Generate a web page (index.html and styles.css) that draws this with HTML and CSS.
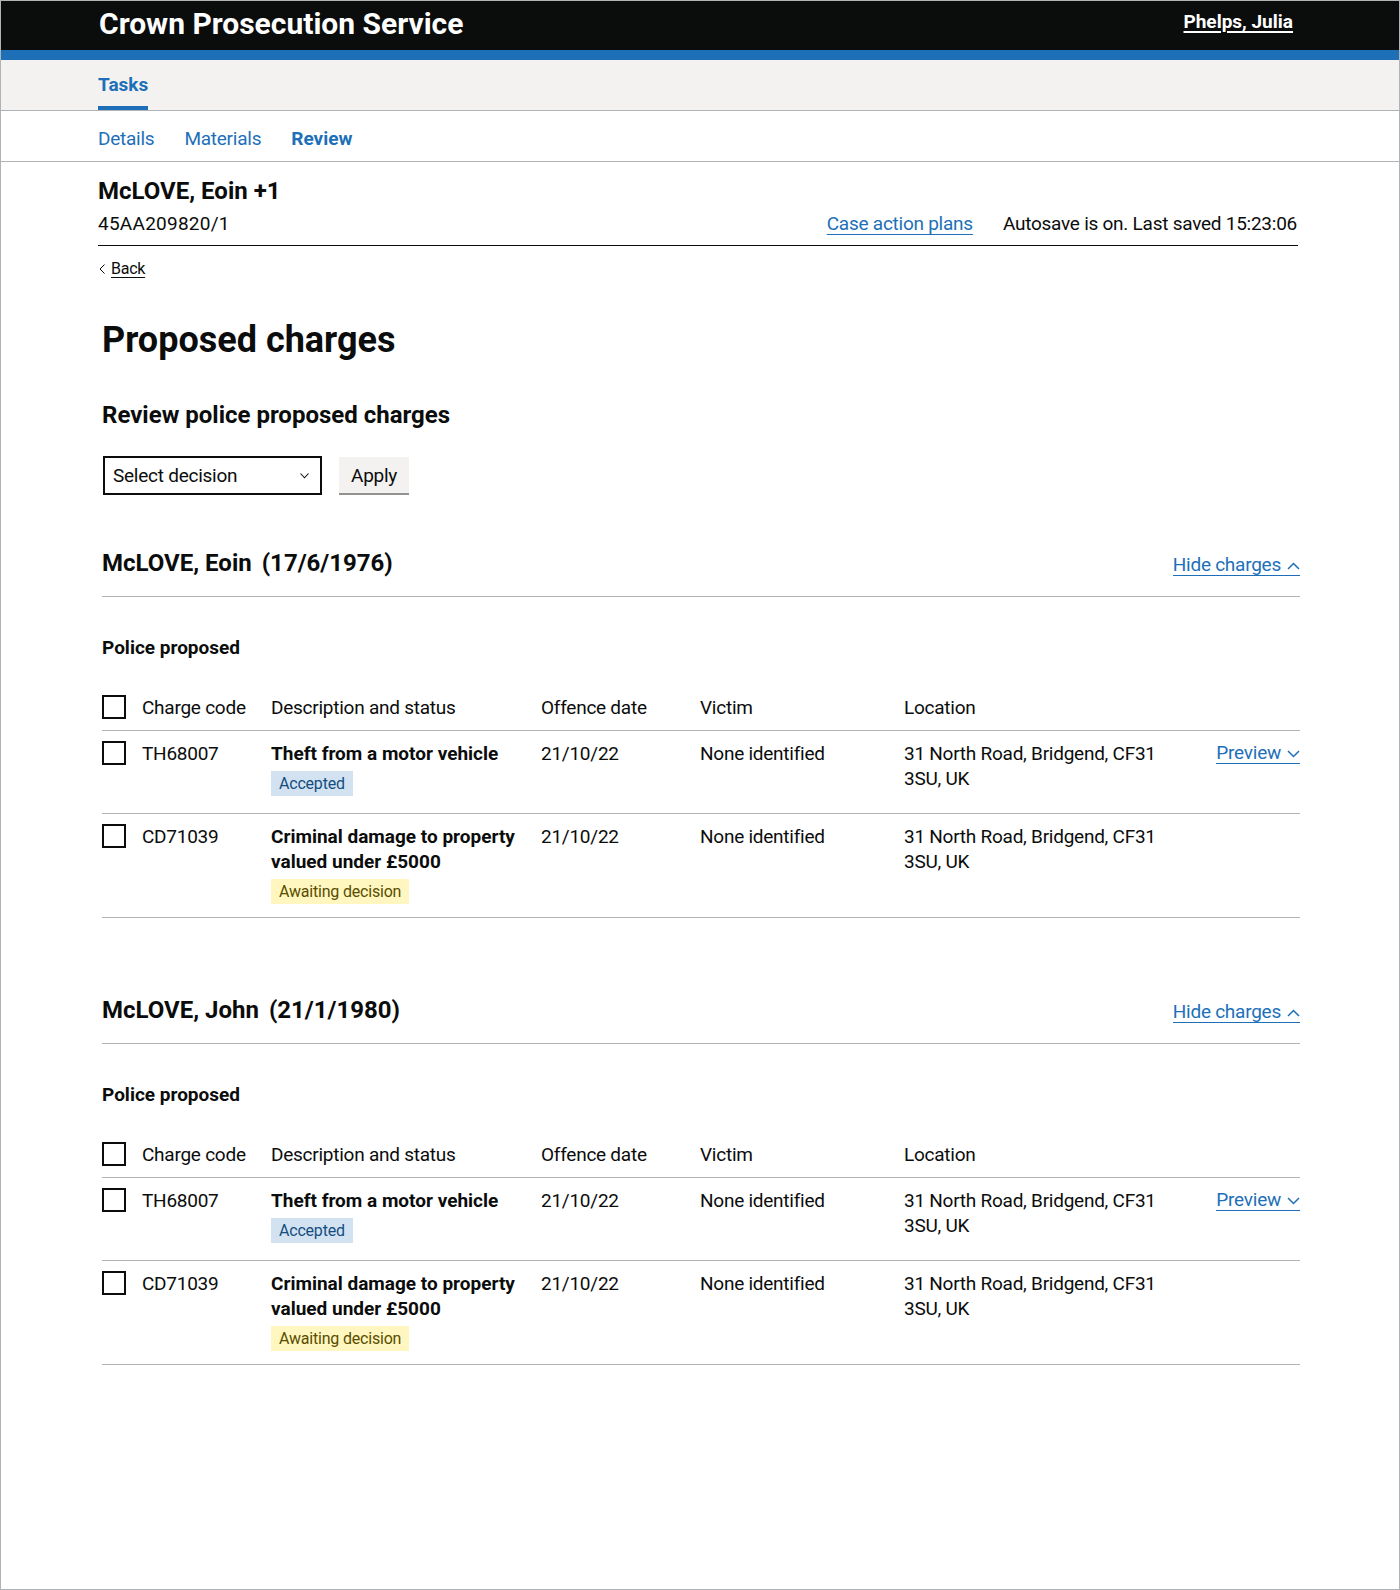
FILE: index.html
```html
<!DOCTYPE html>
<html lang="en">
<head>
<meta charset="utf-8">
<title>Proposed charges - Crown Prosecution Service</title>
<link rel="stylesheet" href="styles.css">
</head>
<body>
<div class="page">
  <header class="header">
    <div class="container header-inner">
      <span class="logo">Crown Prosecution Service</span>
      <a class="user" href="#">Phelps, Julia</a>
    </div>
  </header>
  <div class="stripe"></div>
  <nav class="primary-nav">
    <div class="container primary-nav-inner">
      <a class="tab" href="#">Tasks</a>
    </div>
  </nav>
  <nav class="sub-nav">
    <div class="container sub-nav-inner">
      <a href="#">Details</a>
      <a href="#">Materials</a>
      <a class="current" href="#">Review</a>
    </div>
  </nav>
  <div class="container case-header">
    <h1 class="case-name">McLOVE, Eoin +1</h1>
    <div class="case-meta">
      <span class="urn">45AA209820/1</span>
      <div class="case-actions">
        <a href="#" class="link">Case action plans</a>
        <span>Autosave is on. Last saved 15:23:06</span>
      </div>
    </div>
  </div>
  <div class="container back-row">
    <a href="#" class="back"><svg width="6" height="10" viewBox="0 0 6 10" aria-hidden="true"><polyline points="5.5,0.5 1,5 5.5,9.5" fill="none" stroke="#0b0c0c" stroke-width="1"/></svg><span>Back</span></a>
  </div>

  <main class="main">
    <h2 class="page-title">Proposed charges</h2>
    <h3 class="sub-title">Review police proposed charges</h3>
    <div class="decision">
      <div class="select-wrap">
        <select class="select"><option>Select decision</option></select>
        <svg class="select-chevron" width="9" height="6" viewBox="0 0 9 6" aria-hidden="true"><polyline points="0.5,0.5 4.5,4.8 8.5,0.5" fill="none" stroke="#0b0c0c" stroke-width="1.1"/></svg>
      </div>
      <button class="btn-secondary" type="button">Apply</button>
    </div>

    <section class="defendant">
      <div class="defendant-head">
        <h3 class="defendant-name">McLOVE, Eoin<span class="dob">(17/6/1976)</span></h3>
        <a href="#" class="toggle">Hide charges<svg width="13" height="8" viewBox="0 0 13 8" aria-hidden="true"><polyline points="1,7 6.5,1.5 12,7" fill="none" stroke="#1d70b8" stroke-width="1.5"/></svg></a>
      </div>
      <h4 class="group-title">Police proposed</h4>
      <div class="charges">
        <div class="row row-head">
          <div class="cell"><input type="checkbox" class="checkbox" aria-label="Select all"></div>
          <div class="cell">Charge code</div>
          <div class="cell">Description and status</div>
          <div class="cell">Offence date</div>
          <div class="cell">Victim</div>
          <div class="cell">Location</div>
          <div class="cell"></div>
        </div>
        <div class="row row-body">
          <div class="cell"><input type="checkbox" class="checkbox" aria-label="Select TH68007"></div>
          <div class="cell">TH68007</div>
          <div class="cell cell-desc"><strong>Theft from a motor vehicle</strong><span class="tag tag-blue">Accepted</span></div>
          <div class="cell">21/10/22</div>
          <div class="cell">None identified</div>
          <div class="cell cell-loc">31 North Road, Bridgend, CF31 3SU, UK</div>
          <div class="cell cell-action"><a href="#" class="toggle toggle-sm">Preview<svg width="13" height="8" viewBox="0 0 13 8" aria-hidden="true"><polyline points="1,1 6.5,6.5 12,1" fill="none" stroke="#1d70b8" stroke-width="1.5"/></svg></a></div>
        </div>
        <div class="row row-body">
          <div class="cell"><input type="checkbox" class="checkbox" aria-label="Select CD71039"></div>
          <div class="cell">CD71039</div>
          <div class="cell cell-desc"><strong>Criminal damage to property valued under £5000</strong><span class="tag tag-yellow">Awaiting decision</span></div>
          <div class="cell">21/10/22</div>
          <div class="cell">None identified</div>
          <div class="cell cell-loc">31 North Road, Bridgend, CF31 3SU, UK</div>
          <div class="cell cell-action"></div>
        </div>
      </div>
    </section>

    <section class="defendant">
      <div class="defendant-head">
        <h3 class="defendant-name">McLOVE, John<span class="dob">(21/1/1980)</span></h3>
        <a href="#" class="toggle">Hide charges<svg width="13" height="8" viewBox="0 0 13 8" aria-hidden="true"><polyline points="1,7 6.5,1.5 12,7" fill="none" stroke="#1d70b8" stroke-width="1.5"/></svg></a>
      </div>
      <h4 class="group-title">Police proposed</h4>
      <div class="charges">
        <div class="row row-head">
          <div class="cell"><input type="checkbox" class="checkbox" aria-label="Select all"></div>
          <div class="cell">Charge code</div>
          <div class="cell">Description and status</div>
          <div class="cell">Offence date</div>
          <div class="cell">Victim</div>
          <div class="cell">Location</div>
          <div class="cell"></div>
        </div>
        <div class="row row-body">
          <div class="cell"><input type="checkbox" class="checkbox" aria-label="Select TH68007"></div>
          <div class="cell">TH68007</div>
          <div class="cell cell-desc"><strong>Theft from a motor vehicle</strong><span class="tag tag-blue">Accepted</span></div>
          <div class="cell">21/10/22</div>
          <div class="cell">None identified</div>
          <div class="cell cell-loc">31 North Road, Bridgend, CF31 3SU, UK</div>
          <div class="cell cell-action"><a href="#" class="toggle toggle-sm">Preview<svg width="13" height="8" viewBox="0 0 13 8" aria-hidden="true"><polyline points="1,1 6.5,6.5 12,1" fill="none" stroke="#1d70b8" stroke-width="1.5"/></svg></a></div>
        </div>
        <div class="row row-body">
          <div class="cell"><input type="checkbox" class="checkbox" aria-label="Select CD71039"></div>
          <div class="cell">CD71039</div>
          <div class="cell cell-desc"><strong>Criminal damage to property valued under £5000</strong><span class="tag tag-yellow">Awaiting decision</span></div>
          <div class="cell">21/10/22</div>
          <div class="cell">None identified</div>
          <div class="cell cell-loc">31 North Road, Bridgend, CF31 3SU, UK</div>
          <div class="cell cell-action"></div>
        </div>
      </div>
    </section>
  </main>
</div>
</body>
</html>
```

FILE: styles.css
```css
* { box-sizing: border-box; }

html, body {
  margin: 0;
  padding: 0;
}

body {
  font-family: Roboto, "Liberation Sans", Arial, sans-serif;
  color: #0b0c0c;
  background: #fff;
  letter-spacing: -0.25px;
}

strong, h1, h2, h3, h4,
.logo, .user, .tab, .sub-nav a.current {
  letter-spacing: 0;
}

.page {
  min-height: 1590px;
  border: 1px solid #b1b4b6;
}

.container {
  width: 1200px;
  margin-left: calc(50% - 602px);
}

/* Header */
.header {
  background: #0b0c0c;
  height: 49px;
}

.header-inner {
  display: flex;
  justify-content: space-between;
  align-items: flex-start;
}

.logo {
  color: #fff;
  font-weight: 700;
  font-size: 30px;
  line-height: 46px;
  padding-left: 1px;
}

.user {
  color: #fff;
  font-weight: 700;
  font-size: 19px;
  line-height: 20px;
  margin-top: 11px;
  margin-right: 5px;
  text-decoration: underline;
  text-decoration-thickness: 2px;
  text-underline-offset: 3px;
}

.stripe {
  height: 10px;
  background: #1d70b8;
}

/* Primary navigation */
.primary-nav {
  background: #f3f2f1;
  height: 51px;
  border-bottom: 1px solid #b1b4b6;
}

.primary-nav-inner {
  height: 50px;
  display: flex;
  align-items: flex-end;
}

.tab {
  display: block;
  color: #1d70b8;
  font-weight: 700;
  font-size: 19px;
  line-height: 25px;
  padding-bottom: 9px;
  border-bottom: 4px solid #1d70b8;
  text-decoration: none;
}

/* Sub navigation */
.sub-nav {
  height: 51px;
  border-bottom: 1px solid #b1b4b6;
}

.sub-nav-inner {
  display: flex;
  gap: 30px;
  padding-top: 15px;
}

.sub-nav a {
  color: #1d70b8;
  font-size: 19px;
  line-height: 25px;
  text-decoration: none;
}

.sub-nav a.current {
  font-weight: 700;
}

/* Case header */
.case-header {
  padding-top: 14px;
  padding-bottom: 9px;
  border-bottom: 1px solid #0b0c0c;
}

.case-name {
  margin: 0;
  font-size: 24px;
  line-height: 30px;
  font-weight: 700;
}

.case-meta {
  display: flex;
  justify-content: space-between;
  align-items: baseline;
  margin-top: 5px;
  font-size: 19px;
  line-height: 25px;
}

.urn {
  letter-spacing: 0.25px;
}

.case-actions {
  display: flex;
  gap: 30px;
  margin-right: 1px;
}

.link {
  color: #1d70b8;
  text-decoration: underline;
  text-decoration-thickness: 1px;
  text-underline-offset: 4px;
}

.back-row {
  padding-top: 13px;
}

.back {
  display: inline-flex;
  align-items: center;
  gap: 6px;
  margin-left: 1px;
  font-size: 16px;
  line-height: 20px;
  color: #0b0c0c;
  text-decoration: none;
}

.back span {
  text-decoration: underline;
  text-underline-offset: 3px;
}

/* Main */
.main {
  width: 1198px;
  margin-left: calc(50% - 598px);
  padding-bottom: 40px;
}

.page-title {
  margin: 41px 0 0;
  font-size: 36px;
  line-height: 40px;
  font-weight: 700;
}

.sub-title {
  margin: 40px 0 0;
  font-size: 24px;
  line-height: 30px;
  font-weight: 700;
}

.decision {
  display: flex;
  align-items: flex-start;
  gap: 17px;
  margin-top: 26px;
}

.select-wrap {
  position: relative;
  width: 219px;
  margin-left: 1px;
}

.select {
  appearance: none;
  -webkit-appearance: none;
  display: block;
  width: 219px;
  height: 39px;
  margin: 0;
  padding: 0 30px 0 8px;
  border: 2px solid #0b0c0c;
  border-radius: 0;
  background: #fff;
  font-family: inherit;
  font-size: 19px;
  letter-spacing: -0.25px;
  color: #0b0c0c;
}

.select-chevron {
  position: absolute;
  right: 13px;
  top: 17px;
}

.btn-secondary {
  height: 36px;
  margin-top: 1px;
  padding: 0 12px;
  background: #f3f2f1;
  border: 0;
  border-radius: 0;
  box-shadow: 0 2px 0 #929191;
  font-family: inherit;
  font-size: 19px;
  letter-spacing: -0.25px;
  color: #0b0c0c;
}

/* Defendant sections */
.defendant {
  margin-top: 53px;
}

.defendant + .defendant {
  margin-top: 77px;
}

.defendant-head {
  display: flex;
  justify-content: space-between;
  align-items: flex-end;
  padding-bottom: 18px;
  border-bottom: 1px solid #b1b4b6;
}

.defendant-name {
  margin: 0;
  font-size: 24px;
  line-height: 30px;
  font-weight: 700;
}

.dob {
  margin-left: 10px;
}

.toggle {
  display: inline-flex;
  align-items: center;
  gap: 6px;
  font-size: 19px;
  line-height: 20px;
  color: #1d70b8;
  text-decoration: none;
  border-bottom: 1px solid #1d70b8;
  margin-bottom: 2px;
}

.toggle svg {
  margin-top: 1px;
}

.toggle-sm {
  margin-top: 2px;
  margin-bottom: 0;
}

.group-title {
  margin: 38px 0 0;
  font-size: 19px;
  line-height: 25px;
  font-weight: 700;
}

.charges {
  margin-top: 25px;
}

.row {
  display: grid;
  grid-template-columns: 40px 129px 270px 159px 204px 300px 1fr;
  border-bottom: 1px solid #b1b4b6;
  font-size: 19px;
  line-height: 25px;
}

.row-head {
  padding: 10px 0;
}

.row-body {
  min-height: 83px;
  padding: 10px 0 13px;
}

.cell-desc,
.cell-loc {
  padding-right: 20px;
}

.cell-desc strong {
  display: block;
  font-weight: 700;
}

.cell-action {
  display: flex;
  justify-content: flex-end;
  align-items: flex-start;
}

.checkbox {
  appearance: none;
  -webkit-appearance: none;
  display: block;
  width: 24px;
  height: 24px;
  margin: 0;
  border: 2px solid #0b0c0c;
  border-radius: 0;
  background: #fff;
}

.tag {
  display: block;
  width: fit-content;
  margin-top: 5px;
  padding: 5px 8px 4px;
  font-size: 16px;
  line-height: 16px;
  letter-spacing: -0.2px;
}

.tag-blue {
  background: #d2e2f1;
  color: #144e81;
}

.tag-yellow {
  background: #fff7bf;
  color: #594d00;
}
```
